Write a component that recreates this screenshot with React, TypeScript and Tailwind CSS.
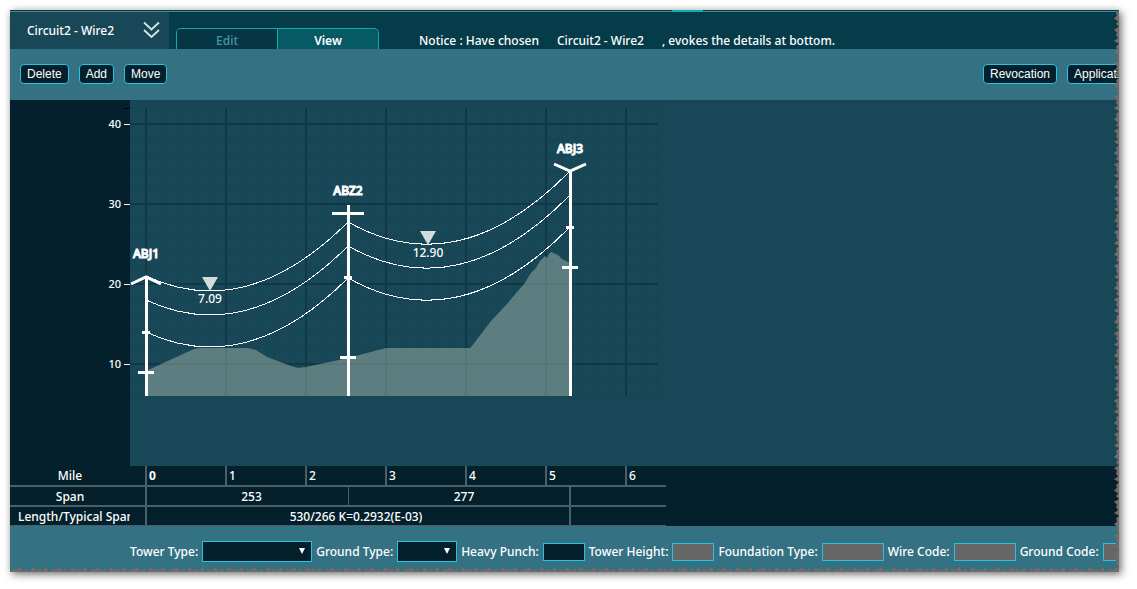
import { useId } from "react";
import type { ReactNode } from "react";

type Point = [number, number];

// chart scale: 80px per mile, 8px per metre of elevation
const px = (mile: number) => 16 + mile * 80;
const py = (elevation: number) => 24 + (40 - elevation) * 8;

const MAJOR_LEVELS = [40, 30, 20, 10];
const MILES = [0, 1, 2, 3, 4, 5, 6];
const FLOOR = py(6);

const TERRAIN: Point[] = [
    [16, 271], [64, 249], [70, 248], [118, 248], [126, 250], [137, 257], [161, 266], [168, 268], [176, 267],
    [218, 258], [256, 248], [276, 248], [340, 248], [342, 246], [361, 221], [377, 204], [381, 199],
    [394, 184], [401, 173], [406, 168], [410, 161], [415, 156], [417, 158], [419, 154], [421, 152],
    [428, 155], [432, 159], [438, 162], [440, 164],
];

const WIRES = [
    { from: [16, 176], to: [218, 122], sag: 37 },
    { from: [16, 200], to: [218, 146], sag: 37 },
    { from: [16, 232], to: [218, 178], sag: 37 },
    { from: [218, 122], to: [440, 71], sag: 44 },
    { from: [218, 146], to: [440, 95], sag: 44 },
    { from: [218, 178], to: [440, 127], sag: 44 },
];

const TOWERS = [
    { name: "ABJ1", x: 16, top: 176, label: 158, head: "M1 184L16 177L31 184", arms: [[232, 4], [272, 8]] },
    { name: "ABZ2", x: 218, top: 105, label: 95, head: "M202 113.5H234", arms: [[177, 4], [257, 8]] },
    { name: "ABJ3", x: 440, top: 71, label: 53, head: "M424 64L440 71L456 64", arms: [[127, 4], [167, 8]] },
];

const SAG_MARKS = [
    { x: 80, y: 191, value: "7.09" },
    { x: 298, y: 145, value: "12.90" },
];

// ragged outline for the right and bottom edges of the panel
const tornEdge = () => {
    const depth = (i: number) => (i % 2 === 0 ? (i * 7) % 3 : 2 + ((i * 5) % 4));
    const points = ["0 0", "100% 0"];
    const right = 200;
    const bottom = 340;
    for (let i = 1; i < right; i++) {
        points.push(`calc(100% - ${depth(i)}px) ${(i / right) * 100}%`);
    }
    for (let i = bottom - 1; i > 0; i--) {
        points.push(`${(i / bottom) * 100}% calc(100% - ${depth(i)}px)`);
    }
    points.push("0 100%");
    return `polygon(${points.join(",")})`;
};

const ToolButton = ({ children }: { children: ReactNode }) => (
    <button
        type="button"
        className="h-5 shrink-0 rounded border border-[#28c3de] bg-[#04202c] px-1.5 font-['Liberation_Sans',sans-serif] text-xs leading-4 text-white"
    >
        {children}
    </button>
);

const Header = () => (
    <header className="flex h-[39px] border-t border-[#063c49] bg-[#063c49]">
        <div className="relative flex flex-1 border-t border-[#4a8799]">
            <span className="absolute -top-0.5 left-[662px] h-0.5 w-[31px] bg-[#08b1b8]" />
            <button type="button" className="flex w-[159px] shrink-0 items-center justify-between bg-[#184858] pr-2 pl-[17px] text-white">
                <span>Circuit2 - Wire2</span>
                <svg viewBox="0 0 20 20" className="mb-0.5 h-5 w-5" fill="none" stroke="#d5e3e6" strokeWidth="1.8">
                    <path d="M3 2.5L10.5 9.5L18 2.5M3 10L10.5 17L18 10" />
                </svg>
            </button>
            <nav className="mt-4 ml-[7px] flex w-[203px] shrink-0 overflow-hidden rounded-t-[5px] border border-b-0 border-[#0fa9ae]">
                <button type="button" className="flex-1 bg-[#063643] pt-1 leading-4 text-[#4396aa]">
                    Edit
                </button>
                <button type="button" className="flex-1 border-l border-[#0fa9ae] bg-[#055a63] pt-1 leading-4 font-semibold text-white">
                    View
                </button>
            </nav>
            <p className="mt-[21px] ml-10 flex leading-4 whitespace-nowrap">
                <span>Notice : Have chosen</span>
                <span className="mx-[18px]">Circuit2 - Wire2</span>
                <span>, evokes the details at bottom.</span>
            </p>
        </div>
    </header>
);

const Toolbar = () => (
    <div className="flex h-[51px] items-center justify-between overflow-hidden bg-[#337183] pb-0.5 pl-2.5">
        <div className="flex gap-2.5">
            <ToolButton>Delete</ToolButton>
            <ToolButton>Add</ToolButton>
            <ToolButton>Move</ToolButton>
        </div>
        <div className="flex w-[136px] gap-2.5 overflow-hidden">
            <ToolButton>Revocation</ToolButton>
            <ToolButton>Application</ToolButton>
        </div>
    </div>
);

const Axis = () => (
    <svg className="h-[366px] w-[120px] shrink-0 bg-[#04202c] text-[11px]" fill="white">
        <path d="M114 8.5H120" stroke="black" />
        {MAJOR_LEVELS.map((level) => (
            <g key={level}>
                <text x="111" y={py(level) + 4} textAnchor="end">
                    {level}
                </text>
                <path d={`M114 ${py(level) + 0.5}H120`} stroke="white" />
            </g>
        ))}
    </svg>
);

const Profile = () => {
    const minorX = Array.from({ length: 34 }, (_, i) => i * 16);
    const minorY = Array.from({ length: 19 }, (_, i) => 8 + i * 16);
    return (
        <svg className="h-[366px] w-[536px] shrink-0" role="img" aria-label="Line profile">
            <g stroke="#103743" strokeOpacity="0.16" strokeWidth="2">
                {minorX.map((x) => (
                    <path key={x} d={`M${x} 8V${FLOOR}`} />
                ))}
                {minorY.map((y) => (
                    <path key={y} d={`M0 ${y}H528`} />
                ))}
            </g>
            <g stroke="#123845" strokeWidth="2">
                {MILES.map((mile) => (
                    <path key={mile} d={`M${px(mile)} 8V${FLOOR}`} />
                ))}
                {MAJOR_LEVELS.map((level) => (
                    <path key={level} d={`M0 ${py(level)}H528`} />
                ))}
            </g>
            <polygon points={`${TERRAIN.join(" ")} 440,${FLOOR} 16,${FLOOR}`} fill="#bfcbb7" fillOpacity="0.42" />
            <g fill="none" stroke="white" shapeRendering="crispEdges">
                {WIRES.map(({ from, to, sag }) => (
                    <path
                        key={from.join("-")}
                        d={`M${from[0]} ${from[1]}Q${(from[0] + to[0]) / 2} ${(from[1] + to[1]) / 2 + sag * 2} ${to[0]} ${to[1]}`}
                    />
                ))}
            </g>
            {TOWERS.map((tower) => (
                <g key={tower.name} fill="none" stroke="white" strokeWidth="3">
                    <path d={`M${tower.x + 0.5} ${tower.top}V${FLOOR}`} />
                    <path d={tower.head} />
                    {tower.arms.map(([y, half]) => (
                        <path key={y} d={`M${tower.x - half} ${y + 0.5}h${half * 2}`} />
                    ))}
                    <text x={tower.x} y={tower.label} textAnchor="middle" fill="white" strokeWidth="1" className="text-xs">
                        {tower.name}
                    </text>
                </g>
            ))}
            {SAG_MARKS.map(({ x, y, value }) => (
                <g key={value}>
                    <path d={`M${x - 8} ${y - 14}h16l-8 14z`} fill="#d3dbdd" />
                    <text x={x} y={y + 12} textAnchor="middle" fill="white" className="text-xs">
                        {value}
                    </text>
                </g>
            ))}
        </svg>
    );
};

const SpanTable = () => (
    <div className="h-[60px] overflow-hidden bg-[#04202c]">
        <table className="w-[656px] table-fixed border-separate border-spacing-0 text-center leading-[18px] [&_td]:border-[#4a5f68] [&_td]:p-0 [&_td]:pt-px [&_th]:border-[#4a5f68] [&_th]:p-0 [&_th]:pt-px [&_th]:font-medium">
            <colgroup>
                <col className="w-[135px]" />
                <col className="w-20" />
                <col className="w-20" />
                <col className="w-[43px]" />
                <col className="w-[37px]" />
                <col className="w-20" />
                <col className="w-20" />
                <col className="w-6" />
                <col className="w-14" />
                <col className="w-[41px]" />
            </colgroup>
            <tbody>
                <tr className="h-[21px]">
                    <th scope="row" className="border-b-2">
                        <div className="w-[120px]">Mile</div>
                    </th>
                    {MILES.map((mile) => (
                        <td
                            key={mile}
                            colSpan={mile === 2 || mile === 5 ? 2 : 1}
                            className={`border-b-2 border-l-2 pl-0.5! text-left ${mile === 0 ? "font-bold" : ""}`}
                        >
                            {mile}
                        </td>
                    ))}
                </tr>
                <tr className="h-5 leading-[17px]">
                    <th scope="row" className="border-b-2">
                        <div className="w-[120px]">Span</div>
                    </th>
                    <td colSpan={3} className="border-b-2 border-l-2 pl-2!">253</td>
                    <td colSpan={4} className="border-b-2 border-l pl-2.5!">277</td>
                    <td colSpan={2} className="border-b-2 border-l-2" />
                </tr>
                <tr className="h-[19px] leading-[17px]">
                    <th scope="row" className="border-b">
                        <div className="w-[120px] overflow-hidden pl-2 text-left whitespace-nowrap">Length/Typical Span</div>
                    </th>
                    <td colSpan={7} className="border-b border-l-2 pr-1!">530/266 K=0.2932(E-03)</td>
                    <td colSpan={2} className="border-b border-l-2" />
                </tr>
            </tbody>
        </table>
    </div>
);

const SelectField = ({ label, width }: { label: string; width: string }) => {
    const id = useId();
    return (
        <div className="flex shrink-0 items-center gap-1">
            <label htmlFor={id}>{label}:</label>
            <div className={`relative ${width}`}>
                <select id={id} className="block h-[21px] w-full appearance-none border border-[#28c3de] bg-[#04202c] px-1 text-white" />
                <svg viewBox="0 0 6 6" className="pointer-events-none absolute top-[7px] right-[7px] h-1.5 w-1.5" fill="white">
                    <path d="M0 0H6L3 6Z" />
                </svg>
            </div>
        </div>
    );
};

const TextField = ({ label, width, disabled }: { label: string; width: string; disabled?: boolean }) => {
    const id = useId();
    return (
        <div className="flex shrink-0 items-center gap-1">
            <label htmlFor={id}>{label}:</label>
            <input
                id={id}
                type="text"
                disabled={disabled}
                className={`h-[18px] border border-[#28c3de] bg-[#04202c] px-1 disabled:bg-[#666666] ${width}`}
            />
        </div>
    );
};

const DetailsBar = () => (
    <footer className="h-[46px] bg-[#337183] pt-[15px] pr-[3px] pl-[120px]">
        <form className="flex items-center gap-1 overflow-hidden whitespace-nowrap">
            <SelectField label="Tower Type" width="w-[110px]" />
            <SelectField label="Ground Type" width="w-[60px]" />
            <TextField label="Heavy Punch" width="w-[42px]" />
            <TextField label="Tower Height" width="w-[42px]" disabled />
            <TextField label="Foundation Type" width="w-[62px]" disabled />
            <TextField label="Wire Code" width="w-[62px]" disabled />
            <TextField label="Ground Code" width="w-[62px]" disabled />
        </form>
    </footer>
);

export default function App() {
    return (
        <div className="bg-white pt-2.5 pr-[18px] pb-[17px] pl-2.5 font-['Noto_Sans',sans-serif] text-xs font-medium text-white">
            <div className="bg-[#756c69] shadow-[2px_2px_8px_rgba(0,0,0,0.6)]">
                <div style={{ clipPath: tornEdge() }}>
                    <Header />
                    <Toolbar />
                    <main>
                        <div className="flex overflow-hidden bg-[#184858]">
                            <Axis />
                            <Profile />
                        </div>
                        <SpanTable />
                    </main>
                    <DetailsBar />
                </div>
            </div>
        </div>
    );
}
